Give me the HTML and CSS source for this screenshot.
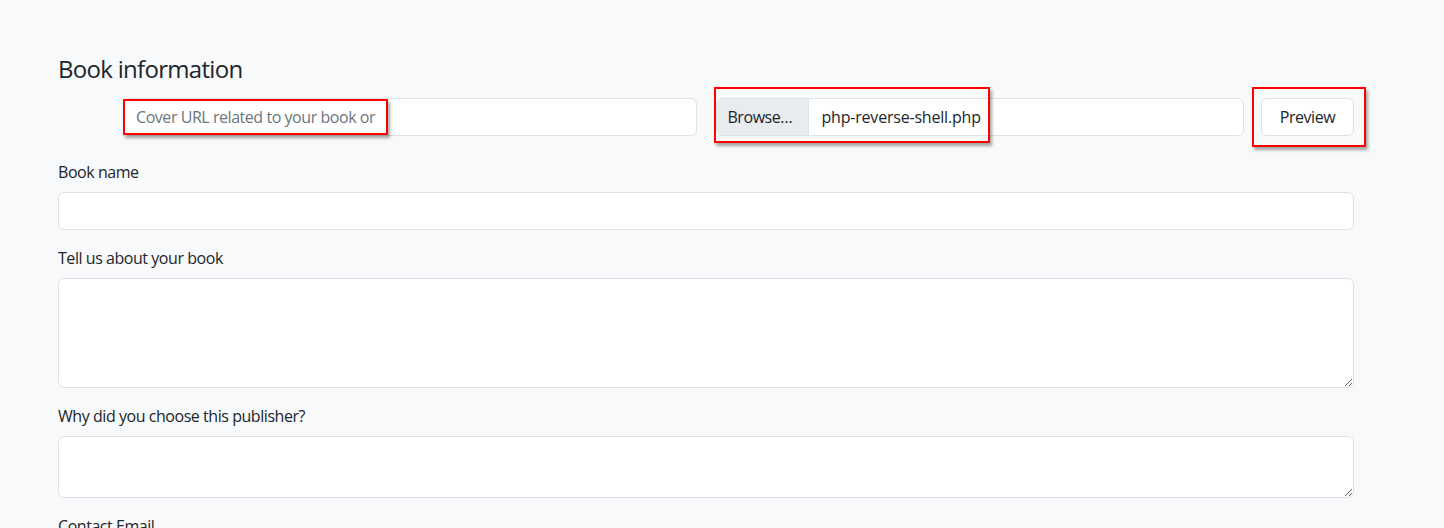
FILE: index.html
```html
<!DOCTYPE html>
<html lang="en">
<head>
<meta charset="utf-8">
<title>Book information</title>
<link rel="stylesheet" href="styles.css">
</head>
<body>
<main class="page">
  <h5 class="title">Book information</h5>
  <div class="cover-row">
    <div class="cover-url">
      <input class="field" type="text" placeholder="Cover URL related to your book or">
      <span class="mark mark-url"></span>
    </div>
    <div class="file-wrap">
      <div class="file-input">
        <span class="file-btn">Browse…</span>
        <span class="file-name">php-reverse-shell.php</span>
      </div>
      <span class="mark mark-file"></span>
    </div>
    <div class="preview-wrap">
      <button class="btn-preview" type="button">Preview</button>
      <span class="mark mark-preview"></span>
    </div>
  </div>

  <div class="group">
    <label class="label">Book name</label>
    <input class="field" type="text">
  </div>
  <div class="group">
    <label class="label">Tell us about your book</label>
    <textarea class="field area-lg"></textarea>
  </div>
  <div class="group">
    <label class="label">Why did you choose this publisher?</label>
    <textarea class="field area-sm"></textarea>
  </div>
  <div class="group">
    <label class="label">Contact Email</label>
    <input class="field" type="email">
  </div>
</main>
</body>
</html>
```
FILE: styles.css
```css
html, body {
  margin: 0;
  padding: 0;
  background: #f8f9fa;
}
body {
  font-family: "Open Sans", "Noto Sans", sans-serif;
  color: #212529;
  font-size: 16px;
  line-height: 24px;
  letter-spacing: -0.45px;
  overflow: hidden;
}
.page {
  width: 1296px;
  margin-left: 58px;
  padding-top: 54px;
}
.title {
  margin: 0 0 15px 0;
  font-size: 24px;
  font-weight: 400;
  line-height: 29px;
  letter-spacing: -0.7px;
}
.field {
  display: block;
  box-sizing: border-box;
  width: 100%;
  height: 38px;
  padding: 6px 12px;
  font: inherit;
  letter-spacing: inherit;
  color: #212529;
  background: #fff;
  border: 1px solid #dee2e6;
  border-radius: 6px;
  outline: none;
}
.field::placeholder {
  color: #6c757d;
}
textarea.field {
  resize: vertical;
}
.area-lg { height: 110px; }
.area-sm { height: 62px; }

.cover-row {
  display: flex;
  align-items: center;
  margin-bottom: 24px;
}
.cover-url {
  position: relative;
  margin-left: 65px;
  width: 575px;
}
.file-wrap {
  position: relative;
  margin-left: 19px;
  width: 528px;
}
.file-input {
  display: flex;
  box-sizing: border-box;
  height: 38px;
  background: #fff;
  border: 1px solid #dee2e6;
  border-radius: 6px;
  overflow: hidden;
}
.file-btn {
  width: 92px;
  flex: none;
  box-sizing: border-box;
  padding: 6px 10px;
  background: #e9ecef;
  border-right: 1px solid #dee2e6;
  white-space: nowrap;
}
.file-name {
  padding: 6px 12px;
  white-space: nowrap;
  letter-spacing: -0.2px;
}
.preview-wrap {
  position: relative;
  margin-left: 17px;
}
.btn-preview {
  box-sizing: border-box;
  width: 93px;
  height: 38px;
  font: inherit;
  letter-spacing: inherit;
  color: #212529;
  background: #fff;
  border: 1px solid #dee2e6;
  border-radius: 6px;
  padding: 6px 12px;
}
.mark {
  position: absolute;
  box-sizing: border-box;
  border: 2px solid #ff0000;
  box-shadow: 2px 3px 3px rgba(0, 0, 0, 0.35);
  pointer-events: none;
}
.mark-url {
  left: 0;
  top: 1px;
  width: 265px;
  height: 36px;
}
.mark-file {
  left: -2px;
  top: -11px;
  width: 276px;
  height: 56px;
}
.mark-preview {
  left: -9px;
  top: -11px;
  width: 114px;
  height: 60px;
}
.group {
  margin-bottom: 16px;
}
.label {
  display: block;
  margin-bottom: 8px;
}
```
